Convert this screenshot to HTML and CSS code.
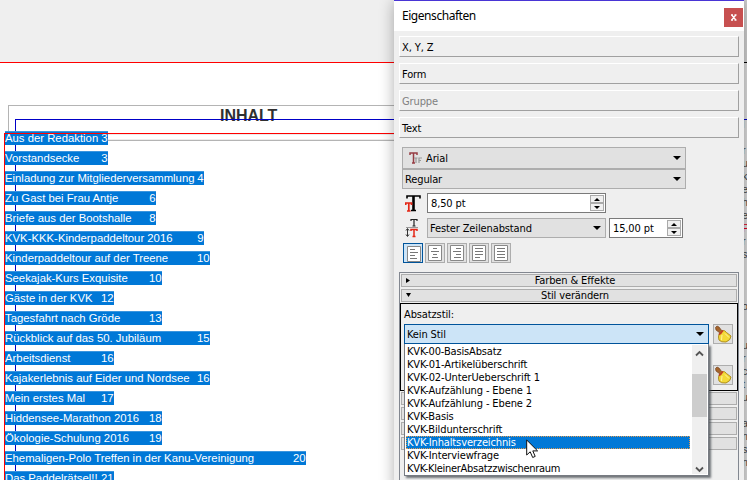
FILE: index.html
```html
<!DOCTYPE html>
<html lang="de">
<head>
<meta charset="utf-8">
<title>Eigenschaften</title>
<link rel="stylesheet" href="styles.css">
</head>
<body>
<svg width="0" height="0" class="defs">
  <symbol id="broom" viewBox="0 0 18 18">
    <path d="M1.500 2.500L3 1L5 2L8 6L6 8L2 5Z" fill="#a5652d" stroke="#75421c" stroke-width=".7"/>
    <path d="M8 5.500Q11 5 12.500 7.500L17 11Q17 15 12 17Q7 17.500 5 15Q4 12 5 9Z" fill="#f3d938" stroke="#a78514" stroke-width=".9"/>
    <path d="M8 10L7.500 15M11 8.500L15 12.500" fill="none" stroke="#fff3a0" stroke-width="1"/>
    <path d="M5 9.500Q7 8.500 8.800 5.500" fill="none" stroke="#c43b26" stroke-width="1.600"/>
  </symbol>
</svg>
<main class="desk">
  <div class="page"></div>
  <div class="frame-grey"></div>
  <h1>INHALT</h1>
  <div class="frame-blue"></div>
  <div class="frame-shade"></div>
  <ul class="toc">
    <li style="width:103px"><span>Aus der Redaktion</span><b>3</b></li>
    <li style="width:103px"><span>Vorstandsecke</span><b>3</b></li>
    <li style="width:199px"><span>Einladung zur Mitgliederversammlung</span><b>4</b></li>
    <li style="width:151px"><span>Zu Gast bei Frau Antje</span><b>6</b></li>
    <li style="width:151px"><span>Briefe aus der Bootshalle</span><b>8</b></li>
    <li style="width:199px"><span>KVK-KKK-Kinderpaddeltour 2016</span><b>9</b></li>
    <li style="width:205px"><span>Kinderpaddeltour auf der Treene</span><b>10</b></li>
    <li style="width:157px"><span>Seekajak-Kurs Exquisite</span><b>10</b></li>
    <li style="width:109px"><span>Gäste in der KVK</span><b>12</b></li>
    <li style="width:157px"><span>Tagesfahrt nach Gröde</span><b>13</b></li>
    <li style="width:205px"><span>Rückblick auf das 50. Jubiläum</span><b>15</b></li>
    <li style="width:109px"><span>Arbeitsdienst</span><b>16</b></li>
    <li style="width:205px"><span>Kajakerlebnis auf Eider und Nordsee</span><b>16</b></li>
    <li style="width:109px"><span>Mein erstes Mal</span><b>17</b></li>
    <li style="width:157px"><span>Hiddensee-Marathon 2016</span><b>18</b></li>
    <li style="width:157px"><span>Ökologie-Schulung 2016</span><b>19</b></li>
    <li style="width:301px"><span>Ehemaligen-Polo Treffen in der Kanu-Vereinigung</span><b>20</b></li>
    <li style="width:109px"><span>Das Paddelrätsel!!</span><b>21</b></li>
  </ul>
  <div class="frame-red"></div>
  <div class="page-two"><i></i><i class="blue"></i>
    <pre>l

r
u
k
e
h
e
<em>P</em>
r
s



o


u
r
c
t
u

a
n
s
n


e</pre>
  </div>

  <section class="panel">
    <header><span>Eigenschaften</span><button class="close"><svg width="7" height="7" viewBox="0 0 7 7"><path d="M1 1H3M4.500 1H6.500M1 6H3M4.500 6H6.500M1.800 1L5.700 6M5.700 1L1.800 6" stroke="#fff" stroke-width="1.300"/></svg></button></header>
    <nav>
      <button>X, Y, Z</button>
      <button>Form</button>
      <button class="off">Gruppe</button>
      <button>Text</button>
    </nav>
    <div class="fields">
      <div class="combo face"><svg class="tt" width="13" height="13" viewBox="0 0 13 13"><path d="M1 3V1H8V3M4.500 1V11M3 11H6" fill="none" stroke="#963c43" stroke-width="1.500"/><path d="M5 6H8.500M7 6V11M10 11V6H13M10 8.500H12" fill="none" stroke="#999" stroke-width="1.200"/></svg><span>Arial</span><i class="down"></i></div>
      <div class="combo regular"><span>Regular</span><i class="down"></i></div>
      <div class="row size">
        <svg width="16" height="17" viewBox="0 0 16 17"><path d="M2 3.500V1H15V3.500M6 15.500H11" fill="none" stroke="#000" stroke-width="1.600"/><path d="M8.500 1V15" stroke="#000" stroke-width="2.600"/><path d="M.700 10V8H6.500V10M3.800 8V16M2 16H5.500" fill="none" stroke="#e32616" stroke-width="1.700"/></svg>
        <div class="spin"><span>8,50 pt</span><div class="steps"><i class="up"></i><i></i></div></div>
      </div>
      <div class="row lead">
        <svg width="16" height="20" viewBox="0 0 16 20"><path d="M6 3V1.500H12V3M9 1.500V8M7.500 8H10.500" fill="none" stroke="#222" stroke-width="1.200"/><path d="M1 9.500H13" stroke="#999"/><path d="M2.500 11V18M1 12.500L2.500 10.500L4 12.500M1 16.500L2.500 18.500L4 16.500" fill="none" stroke="#333"/><path d="M6 13V11.500H12V13M9 11.500V18M7.500 18.500H10.500" fill="none" stroke="#e32616" stroke-width="1.500"/></svg>
        <div class="combo mode"><span>Fester Zeilenabstand</span><i class="down"></i></div>
        <div class="spin small"><span>15,00 pt</span><div class="steps"><i class="up"></i><i></i></div></div>
      </div>
      <div class="aligns">
        <button class="on"><svg viewBox="0 0 14 16"><path class="sheet" d="M.500.500H13.500V15.500H.500Z"/><path d="M3 3.500H8M3 6.500H11M3 9.500H8M3 12.500H10"/></svg></button>
        <button><svg viewBox="0 0 14 16"><path class="sheet" d="M.500.500H13.500V15.500H.500Z"/><path d="M5 3.500H9M3 6.500H11M5 9.500H9M4 12.500H10"/></svg></button>
        <button><svg viewBox="0 0 14 16"><path class="sheet" d="M.500.500H13.500V15.500H.500Z"/><path d="M6 3.500H11M3 6.500H11M6 9.500H11M4 12.500H11"/></svg></button>
        <button><svg viewBox="0 0 14 16"><path class="sheet" d="M.500.500H13.500V15.500H.500Z"/><path d="M3 3.500H11M3 6.500H11M3 9.500H11M3 12.500H8"/></svg></button>
        <button><svg viewBox="0 0 14 16"><path class="sheet" d="M.500.500H13.500V15.500H.500Z"/><path d="M3 3.500H11M3 6.500H11M3 9.500H11M3 12.500H11"/></svg></button>
      </div>
    </div>
    <div class="toolbox">
      <button class="fold"><svg width="4" height="5"><path d="M0 0L4 2.500L0 5Z"/></svg>Farben &amp; Effekte</button>
      <button class="fold"><svg width="5" height="4"><path d="M0 0H5L2.500 4Z"/></svg>Stil verändern</button>
      <div class="style">
        <label>Absatzstil:</label>
        <div class="pick">
          <div class="combo active"><span>Kein Stil</span><i class="down"></i></div>
          <button class="broom"><svg width="18" height="18"><use href="#broom"/></svg></button>
          <ul class="menu">
            <li class="wide">KVK-00-BasisAbsatz</li>
            <li>KVK-01-Artikelüberschrift</li>
            <li>KVK-02-UnterUeberschrift 1</li>
            <li>KVK-Aufzählung - Ebene 1</li>
            <li>KVK-Aufzählung - Ebene 2</li>
            <li>KVK-Basis</li>
            <li>KVK-Bildunterschrift</li>
            <li class="sel">KVK-Inhaltsverzeichnis</li>
            <li>KVK-Interviewfrage</li>
            <li class="tight">KVK-KleinerAbsatzzwischenraum</li>
            <li class="scroll"><svg width="9" height="7"><path d="M1 5.500L4.500 2L8 5.500"/></svg><i></i><svg width="9" height="7"><path d="M1 1.500L4.500 5L8 1.500"/></svg></li>
          </ul>
        </div>
        <button class="broom second"><svg width="18" height="18"><use href="#broom"/></svg></button>
      </div>
      <button class="fold"></button><button class="fold"></button><button class="fold"></button><button class="fold"></button>
    </div>
  </section>
  <svg class="cursor" width="13" height="20" viewBox="0 0 13 20"><path d="M.700 1V16L4.200 12.800L6.700 18.500L9.200 17.400L6.800 11.900H11.600Z" fill="#fff" stroke="#111"/></svg>
</main>
</body>
</html>
```
FILE: styles.css
```css
* { box-sizing: border-box; }
body { margin: 0; font: 11px/13px "DejaVu Sans Condensed", "DejaVu Sans", sans-serif; font-stretch: condensed; color: #000; }
button { font: inherit; color: inherit; letter-spacing: inherit; padding: 0; border: 0; background: none; text-align: left; }
ul { list-style: none; margin: 0; padding: 0; }
svg { display: block; flex: none; }
.defs { position: absolute; }
.desk { position: relative; width: 747px; height: 480px; overflow: hidden; background: #efefef; }

/* document canvas */
.page { position: absolute; left: 0; top: 62px; width: 744px; height: 418px; background: #fff; border-top: 1px solid #f00; }
.frame-grey { position: absolute; left: 8px; top: 105px; width: 500px; height: 36px; border: 1px solid #b4b4b4; }
.frame-shade { position: absolute; left: 8px; top: 134px; width: 400px; height: 6px; border-top: 1px solid #ececec; border-bottom: 1px solid #ececec; }
.frame-blue { position: absolute; left: 15px; top: 119px; width: 500px; height: 400px; border: 1px solid #0000c8; }
.frame-red { position: absolute; left: 4px; top: 133px; width: 500px; height: 400px; border: 1px solid #f00; }
h1 { position: absolute; left: 220px; top: 106px; margin: 0; font: bold 16px/19px "Liberation Sans", Arial, sans-serif; letter-spacing: -.05px; color: #303030; }
.toc { position: absolute; left: 5px; top: 131px; display: flex; flex-direction: column; gap: 6px; font: 11.33px/14px "Liberation Sans", Arial, sans-serif; color: #fff; }
.toc li { display: flex; justify-content: space-between; height: 14px; background: #0078d7; white-space: nowrap; border-top: 1px solid #3b95de; line-height: 12px; }
.toc b { font-weight: normal; margin-right: .4px; }
.page-two { position: absolute; left: 744px; top: 0; width: 3px; height: 480px; overflow: hidden; background: linear-gradient(#cfcfcf 62px, #dcdcdc 62px); }
.page-two i { position: absolute; left: 0; top: 62px; width: 3px; height: 1px; background: #000; }
.page-two .blue { top: 119px; background: #0000c8; }
.page-two pre { margin: 118px 0 0 -2px; font: 11px/13px "Liberation Sans", sans-serif; color: #444; }
.page-two em { font-style: normal; color: #e00020; }

/* properties window */
.panel { position: absolute; left: 394px; top: 0; width: 350px; height: 490px; background: #efefef; border-top: 1px solid #4935d5; box-shadow: 0 2px 14px rgba(0,0,0,.32); letter-spacing: -.12px; }
.panel header { height: 30px; background: #fff; display: flex; align-items: center; justify-content: space-between; padding: 0 1px 0 8px; font: 12px/16px "Noto Sans", sans-serif; letter-spacing: -.45px; }
.close { width: 19px; height: 19px; margin-top: 3px; background: #c75050; display: flex; align-items: center; justify-content: center; }
nav { display: flex; flex-direction: column; gap: 6px; padding: 5px 5px 0; }
nav button { height: 21px; padding: 2px 0 0 2px; border: 1px solid #fff; border-right-color: #a0a0a0; border-bottom-color: #a0a0a0; }
nav .off { color: #808080; }
.fields { padding: 9px 0 0 8px; }
.combo { display: flex; align-items: center; justify-content: space-between; height: 20px; padding: 0 4px 0 2px; border: 1px solid #adadad; background: #e1e1e1; }
.face, .regular { width: 284px; }
.face { height: 22px; justify-content: flex-start; gap: 4px; padding-left: 6px; }
.face .down { margin-left: auto; }
.down { width: 0; height: 0; border: 4px solid transparent; border-top-color: #000; border-bottom: 0; }
.row { display: flex; height: 20px; }
.row > svg { margin-left: 3px; }
.size { margin-top: 4px; gap: 6px; align-items: center; }
.lead { margin-top: 5px; }
.lead .mode { width: 179px; margin: 0 3px 0 6px; }
.spin { width: 179px; height: 20px; display: flex; justify-content: space-between; align-items: center; padding: 1px 1px 1px 3px; border: 1px solid #7a7a7a; background: #fff; }
.small { width: 74px; }
.steps { width: 14px; display: flex; flex-direction: column; }
.steps i { height: 8px; background: #f0f0f0; border: 1px solid #aaa; display: flex; justify-content: center; align-items: center; }
.steps i::before { content: ""; border: 3px solid transparent; border-top-color: #000; border-bottom: 0; }
.steps .up::before { transform: rotate(180deg); }
.aligns { display: flex; gap: 2px; margin: 5px 0 0 1px; }
.aligns button { width: 20px; height: 20px; border: 1px solid #adadad; background: #e1e1e1; display: flex; align-items: center; justify-content: center; }
.aligns .on { border-color: #00549b; background: #cce4f7; padding: 1px 0 0 1px; }
.aligns svg { width: 14px; height: 16px; fill: none; stroke: #777; }
.aligns .sheet { fill: #fff; stroke: #888; }
.toolbox { margin: 9px 5px 0; height: 220px; padding: 1px; border: 1px solid #828790; }
.fold { position: relative; display: block; width: 336px; height: 13px; margin-bottom: 2px; border: 1px solid #adadad; background: #e1e1e1; text-align: center; line-height: 12px; padding-left: 12px; }
.fold svg { position: absolute; left: 4px; top: 3px; }
.style { margin: -1px -1px 1px; height: 88px; border: 1px solid #000; padding: 4px 4px 0 3px; }
.style label { display: block; height: 16px; line-height: 13px; }
.pick { position: relative; display: flex; gap: 4px; }
.active { width: 305px; background: #cce4f7; border-color: #00549b; }
.broom { width: 20px; height: 20px; border: 1px solid #adadad; background: #e1e1e1; display: block; }
.second { margin: 21px 0 0 309px; }
.menu { position: absolute; z-index: 2; left: 0; top: 20px; width: 305px; height: 132px; padding: 1px 18px 0 1px; background: #fff; border: 1px solid #777b82; border-top: 0; box-shadow: 2px 2px 2px rgba(70,75,80,.75); }
.menu li { height: 13px; line-height: 13px; padding-left: 1px; white-space: nowrap; }
.menu .wide { letter-spacing: -.15px; }
.menu .tight { letter-spacing: -.28px; }
.menu .sel { background: #0078d7; color: #fff; outline: 1px dotted #e09a50; outline-offset: -1px; }
.menu .scroll { position: absolute; right: 1px; top: 1px; width: 15px; height: 129px; background: #efefef; display: flex; flex-direction: column; align-items: center; padding: 5px 0 1px; }
.scroll svg { fill: none; stroke: #555; stroke-width: 1.8; }
.scroll i { width: 15px; height: 43px; background: #cdcdcd; margin: 17px 0 auto; }
.cursor { position: absolute; left: 526px; top: 439px; z-index: 4; }
```
